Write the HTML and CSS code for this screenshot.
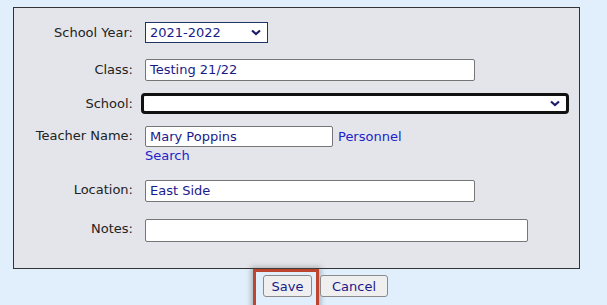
FILE: index.html
```html
<!DOCTYPE html>
<html lang="en">
<head>
    <meta charset="UTF-8">
    <title>Edit Class</title>
    <meta name="viewport" content="width=device-width, initial-scale=1.0">
    <link rel="stylesheet" href="styles.css">
</head>
<body>
    <div class="panel">
        <div class="row row-year">
            <label class="lbl">School Year:</label>
            <div class="field">
                <div class="select year">
                    <span>2021-2022</span>
                    <svg class="chev" width="10" height="7" viewBox="0 0 10 7"><path d="M1 1.5 L5 5 L9 1.5" fill="none" stroke="#1c1c6e" stroke-width="2.2"/></svg>
                </div>
            </div>
        </div>
        <div class="row row-class">
            <label class="lbl">Class:</label>
            <div class="field"><div class="input wide">Testing 21/22</div></div>
        </div>
        <div class="row row-school">
            <label class="lbl">School:</label>
            <div class="field">
                <div class="select school">
                    <span></span>
                    <svg class="chev" width="10" height="7" viewBox="0 0 10 7"><path d="M1 1.5 L5 5 L9 1.5" fill="none" stroke="#1c1c6e" stroke-width="2.2"/></svg>
                </div>
            </div>
        </div>
        <div class="row row-teacher">
            <label class="lbl">Teacher Name:</label>
            <div class="field">
                <div class="inline">
                    <div class="input short">Mary Poppins</div>
                    <a href="#" class="link personnel">Personnel</a>
                </div>
                <a href="#" class="link">Search</a>
            </div>
        </div>
        <div class="row row-location">
            <label class="lbl">Location:</label>
            <div class="field"><div class="input wide">East Side</div></div>
        </div>
        <div class="row row-notes">
            <label class="lbl">Notes:</label>
            <div class="field"><div class="input notes"></div></div>
        </div>
    </div>
    <div class="buttons">
        <div class="highlight"><button class="btn">Save</button></div>
        <button class="btn">Cancel</button>
    </div>
</body>
</html>
```

FILE: styles.css
```css
body {
    margin: 0;
    background: #e1effc;
    font-family: "DejaVu Sans", Verdana, sans-serif;
    font-size: 13px;
    color: #222;
    height: 305px;
    overflow: hidden;
}
.panel {
    margin: 7px 0 0 13px;
    width: 567px;
    height: 262px;
    border: 1px solid #333;
    background: #e4e5ea;
    box-sizing: border-box;
    padding-top: 14px;
}
.row {
    display: flex;
    align-items: flex-start;
}
.lbl {
    width: 119px;
    text-align: right;
    line-height: 21px;
    margin-right: 12px;
    white-space: nowrap;
}
.row-class { margin-top: 16px; }
.row-school { margin-top: 12px; }
.row-teacher { margin-top: 12px; }
.row-teacher .lbl { line-height: 17px; padding-top: 1px; }
.row-location { margin-top: 15px; }
.row-notes { margin-top: 17px; }
.row-location .lbl, .row-notes .lbl { line-height: 19px; }
.input {
    height: 22px;
    box-sizing: border-box;
    border: 1px solid #767676;
    border-radius: 2px;
    background: #fff;
    color: #1a1a8a;
    padding: 0 4px;
    line-height: 20px;
}
.wide { width: 330px; }
.short { width: 188px; height: 21px; line-height: 19px; }
.notes { width: 383px; height: 23px; }
.select {
    display: flex;
    align-items: center;
    justify-content: space-between;
    box-sizing: border-box;
    background: #fff;
    color: #1a1a8a;
}
.year {
    width: 123px;
    height: 21px;
    border: 1px solid #1d3566;
    padding: 0 6px 0 4px;
}
.school {
    width: 428px;
    height: 21px;
    margin-left: -4px;
    border: 3px solid #111;
    border-radius: 4px;
    padding: 0 6px 0 4px;
}
.inline {
    display: flex;
    align-items: center;
}
.link {
    color: #2222cc;
    text-decoration: none;
    display: block;
    line-height: 18px;
}
.personnel {
    margin-left: 5px;
}
.buttons {
    display: flex;
    margin: 0 0 0 253px;
    align-items: flex-start;
}
.highlight {
    border: 3px solid #bd4530;
    padding: 3px 4px 10px 7px;
    box-shadow: 0 0 5px 2px rgba(90, 90, 90, 0.4);
}
.btn {
    font-family: "DejaVu Sans", Verdana, sans-serif;
    font-size: 13px;
    color: #1a1a8a;
    background: #efefef;
    border: 1px solid #8a8a8a;
    border-radius: 3px;
    height: 22px;
    padding: 0 6px;
    margin-top: 6px;
}
.highlight .btn {
    margin-top: 0;
    width: 49px;
}
.highlight + .btn {
    margin-left: 1px;
    width: 68px;
}
```
